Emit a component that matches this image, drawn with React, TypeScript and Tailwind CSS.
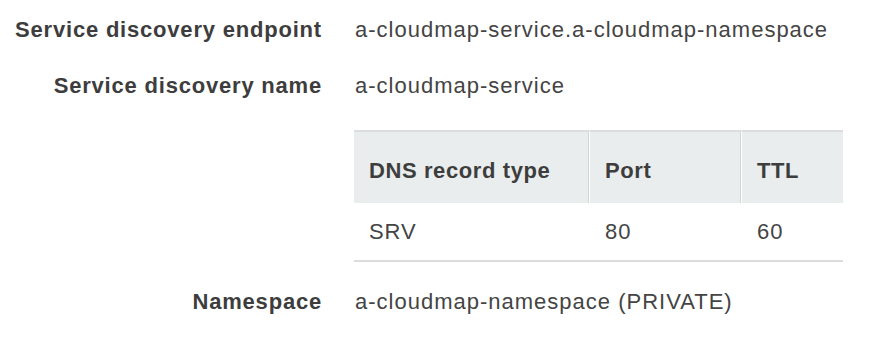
const rows = [
  { label: 'Service discovery endpoint', value: 'a-cloudmap-service.a-cloudmap-namespace' },
  { label: 'Service discovery name', value: 'a-cloudmap-service' },
];

function Row({ label, value, className = '' }: { label: string; value: string; className?: string }) {
  return (
    <div className={`flex items-center h-[28px] ${className}`}>
      <div className="w-[322px] shrink-0 text-right font-bold text-[#3d3d3d] tracking-[0.8px]">{label}</div>
      <div className="ml-[33px] text-[#444] tracking-[1px]">{value}</div>
    </div>
  );
}

export default function App() {
  return (
    <div className="w-[870px] h-[338px] bg-white text-[22px] leading-[28px] font-['Liberation_Sans',Arial,sans-serif]">
      <div className="pt-[16px]">
        <Row {...rows[0]} />
        <Row {...rows[1]} className="mt-[28px]" />

        <div className="flex mt-[30px]">
          <div className="w-[354px] shrink-0" />
          <table className="w-[489px] border-separate border-spacing-0 text-[#3d3d3d]">
            <thead>
              <tr className="bg-[#eaeded] h-[73px]">
                <th className="w-[235px] text-left font-bold pl-[15px] pt-[6px] tracking-[0.6px] border-t-2 border-t-[#dadede] border-r border-r-[#d2d6d6]">
                  DNS record type
                </th>
                <th className="w-[152px] text-left font-bold pl-[15px] pt-[6px] tracking-[0.6px] border-t-2 border-t-[#dadede] border-l border-l-white border-r border-r-[#d2d6d6]">
                  Port
                </th>
                <th className="text-left font-bold pl-[15px] pt-[6px] tracking-[0.6px] border-t-2 border-t-[#dadede] border-l border-l-white">
                  TTL
                </th>
              </tr>
            </thead>
            <tbody className="text-[#444]">
              <tr className="h-[59px]">
                <td className="pl-[15px] tracking-[0.9px] border-b-2 border-b-[#dcdcdc]">SRV</td>
                <td className="pl-[16px] tracking-[0.9px] border-b-2 border-b-[#dcdcdc]">80</td>
                <td className="pl-[16px] tracking-[0.9px] border-b-2 border-b-[#dcdcdc]">60</td>
              </tr>
            </tbody>
          </table>
        </div>

        <Row label="Namespace" value="a-cloudmap-namespace (PRIVATE)" className="mt-[26px]" />
      </div>
    </div>
  );
}
